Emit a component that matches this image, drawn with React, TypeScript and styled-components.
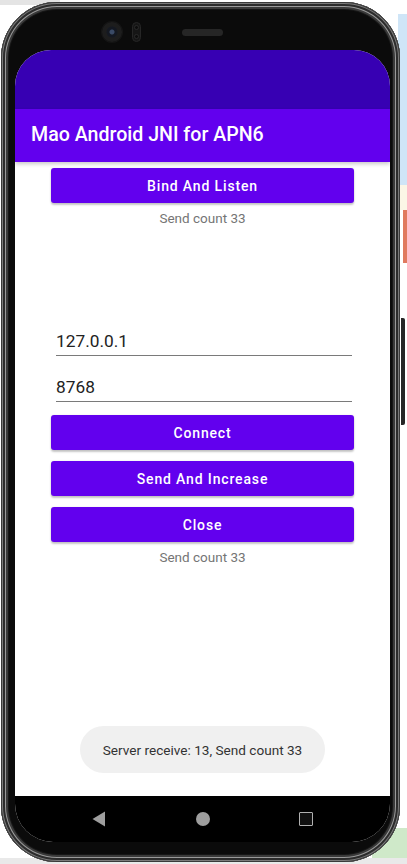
import React from "react";
import styled, { createGlobalStyle } from "styled-components";

const Global = createGlobalStyle`
  html, body { margin: 0; padding: 0; background: #ffffff; }
  body { font-family: Roboto, "Noto Sans", sans-serif; }
  * { box-sizing: border-box; }
`;

const Page = styled.div`
  width: 407px;
  height: 864px;
  overflow: hidden;
  display: flex;
  flex-direction: row;
  align-items: flex-start;
  padding: 2px 0 0 1px;
  background:
    linear-gradient(#e9e9e9, #e9e9e9) 0 858px / 407px 6px no-repeat,
    linear-gradient(#cfe9c9, #cfe9c9) 372px 828px / 35px 30px no-repeat,
    linear-gradient(#e07a5f, #e07a5f) 403px 210px / 4px 53px no-repeat,
    linear-gradient(#fbf6e6, #fbf6e6) 400px 185px / 7px 25px no-repeat,
    linear-gradient(#cfe5f7, #cfe5f7) 398px 14px / 9px 171px no-repeat,
    linear-gradient(#e4e4e4, #e4e4e4) 0 0 / 60px 5px no-repeat,
    #ffffff;
`;

const Phone = styled.div`
  width: 399px;
  height: 860px;
  flex: none;
  border-radius: 56px;
  background: #0b0b0b;
  box-shadow:
    inset 0 0 0 1px #3a3a3a,
    inset 0 0 0 2px #7a7a7a,
    inset 0 0 0 4px #2c2c2c,
    inset 0 0 0 5px #9a9a9a,
    inset 0 0 0 7px #3a3a3a,
    inset 0 0 0 8px #161616;
  display: flex;
  flex-direction: column;
`;

const SideButton = styled.div`
  width: 4px;
  height: 107px;
  margin-top: 316px;
  margin-left: 1px;
  flex: none;
  border-radius: 0 2px 2px 0;
  background: #262626;
`;

const TopBezel = styled.div`
  height: 48px;
  flex: none;
  padding: 20px 0 0 101px;
  display: flex;
  flex-direction: row;
  align-items: flex-start;
`;

const BezelRow = styled.div`
  height: 20px;
  display: flex;
  align-items: center;
`;

const Camera = styled.div`
  width: 20px;
  height: 20px;
  border-radius: 50%;
  background: radial-gradient(circle at 50% 50%, #3a4a66 0 2px, #141821 3px 5px, #1d1d1d 6px);
  box-shadow: 0 0 0 1px #151515;
`;

const Sensor = styled.div`
  width: 9px;
  height: 20px;
  margin-left: 10px;
  border-radius: 5px;
  background: #161616;
  border: 1px solid #262626;
  display: flex;
  flex-direction: column;
  justify-content: space-around;
  align-items: center;
`;

const SensorDot = styled.div`
  width: 5px;
  height: 5px;
  border-radius: 50%;
  background: #0c0c0c;
  border: 1px solid #2a2a2a;
`;

const Speaker = styled.div`
  width: 41px;
  height: 7px;
  margin-left: 41px;
  border-radius: 4px;
  background: #262626;
`;

const Screen = styled.div`
  width: 375px;
  height: 792px;
  margin-left: 14px;
  flex: none;
  border-radius: 36px 36px 38px 38px;
  overflow: hidden;
  display: flex;
  flex-direction: column;
  background: #ffffff;
`;

const StatusBar = styled.div`
  height: 59px;
  flex: none;
  background: #3700b3;
`;

const AppBar = styled.div`
  height: 53px;
  flex: none;
  background: #6200ee;
  display: flex;
  align-items: center;
  padding: 0 0 2px 16px;
  box-shadow: 0 2px 4px rgba(0, 0, 0, 0.22);
  position: relative;
  z-index: 1;
`;

const Title = styled.div`
  color: #ffffff;
  font-size: 19.6px;
  font-weight: 500;
  letter-spacing: 0;
`;

const Content = styled.div`
  flex: 1;
  position: relative;
  display: flex;
  flex-direction: column;
  align-items: center;
`;

const Button = styled.button<{ $top: number }>`
  width: 303px;
  height: 35px;
  margin-top: ${(p) => p.$top}px;
  flex: none;
  border: none;
  border-radius: 3px;
  background: #6200ee;
  color: #ffffff;
  font-family: Roboto, sans-serif;
  font-size: 14px;
  font-weight: 500;
  letter-spacing: 0.85px;
  box-shadow: 0 2px 2px rgba(0, 0, 0, 0.22), 0 0 2px rgba(0, 0, 0, 0.1);
  padding: 0;
`;

const Count = styled.div`
  height: 20px;
  line-height: 20px;
  margin-top: 5px;
  font-size: 13.5px;
  color: #757575;
`;

const Field = styled.div<{ $top: number }>`
  width: 296px;
  margin-top: ${(p) => p.$top}px;
  margin-left: 3px;
  padding-bottom: 2px;
  border-bottom: 1px solid #7a7a7a;
  font-size: 17.3px;
  line-height: 24px;
  color: #222222;
`;

const Toast = styled.div`
  position: absolute;
  left: 65px;
  bottom: 23px;
  width: 245px;
  height: 47px;
  border-radius: 24px;
  background: #f0f0f0;
  display: flex;
  align-items: center;
  justify-content: center;
  font-size: 13.6px;
  color: #333333;
`;

const NavBar = styled.div`
  height: 46px;
  flex: none;
  background: #000000;
  display: flex;
  align-items: center;
  padding: 0 0 0 77px;
`;

const NavIcon = styled.svg<{ $gap: number }>`
  flex: none;
  margin-left: ${(p) => p.$gap}px;
  display: block;
`;

const Recents = styled.div`
  width: 14px;
  height: 14px;
  margin-left: 89px;
  border: 1.5px solid #b0b0b0;
  border-radius: 1px;
  background: #101010;
`;

export default function App() {
  return (
    <>
      <Global />
      <Page>
        <Phone>
          <TopBezel>
            <BezelRow>
              <Camera />
              <Sensor>
                <SensorDot />
                <SensorDot />
              </Sensor>
              <Speaker />
            </BezelRow>
          </TopBezel>
          <Screen>
            <StatusBar />
            <AppBar>
              <Title>Mao Android JNI for APN6</Title>
            </AppBar>
            <Content>
              <Button $top={6}>Bind And Listen</Button>
              <Count>Send count 33</Count>
              <Field $top={101}>127.0.0.1</Field>
              <Field $top={19}>8768</Field>
              <Button $top={13}>Connect</Button>
              <Button $top={11}>Send And Increase</Button>
              <Button $top={11}>Close</Button>
              <Count>Send count 33</Count>
              <Toast>Server receive: 13, Send count 33</Toast>
            </Content>
            <NavBar>
              <NavIcon $gap={0} width="13" height="16" viewBox="0 0 13 16">
                <path d="M13 0.5 L0.5 8 L13 15.5 Z" fill="#9e9e9e" />
              </NavIcon>
              <NavIcon $gap={91} width="14" height="14" viewBox="0 0 14 14">
                <circle cx="7" cy="7" r="7" fill="#9e9e9e" />
              </NavIcon>
              <Recents />
            </NavBar>
          </Screen>
        </Phone>
        <SideButton />
      </Page>
    </>
  );
}
